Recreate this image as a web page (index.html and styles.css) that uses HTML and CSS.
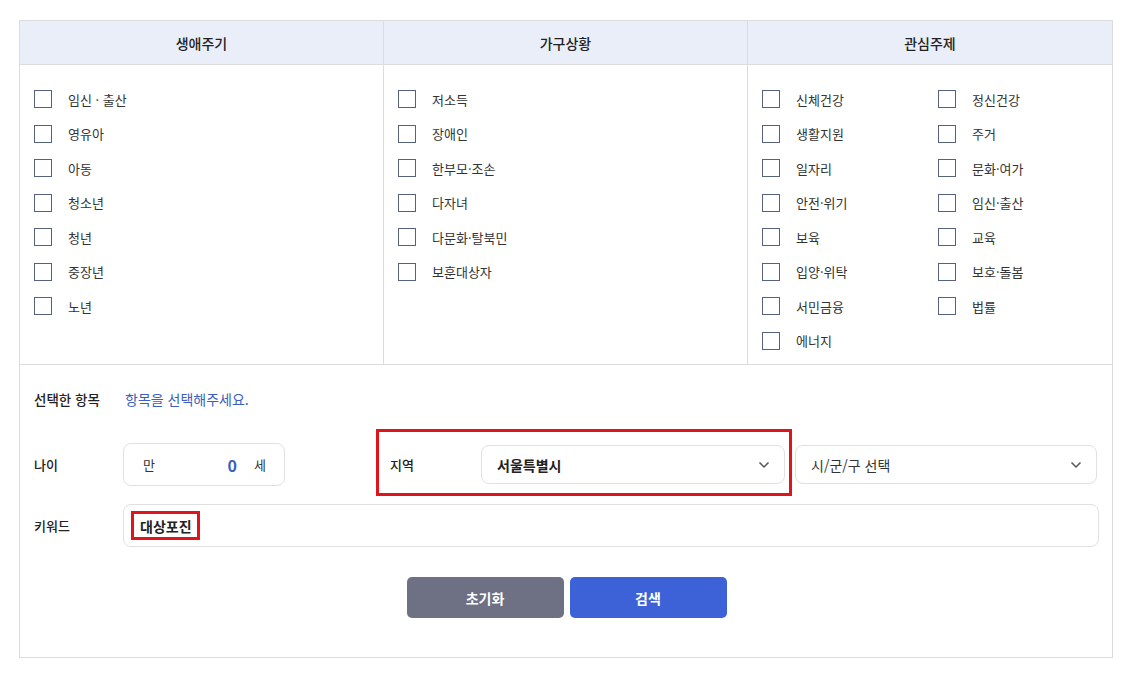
FILE: index.html
```html
<!DOCTYPE html>
<html lang="ko">
<head>
  <meta charset="UTF-8" />
  <meta name="viewport" content="width=device-width, initial-scale=1.0"/>
  <title>맞춤 검색</title>
  <link rel="stylesheet" href="styles.css">
</head>
<body>
  <div class="search-box">
    <div class="category-grid">
      <div class="cat-head">생애주기</div>
      <div class="cat-head">가구상황</div>
      <div class="cat-head">관심주제</div>

      <div class="cat-body">
        <label class="check"><span class="box"></span>임신 · 출산</label>
        <label class="check"><span class="box"></span>영유아</label>
        <label class="check"><span class="box"></span>아동</label>
        <label class="check"><span class="box"></span>청소년</label>
        <label class="check"><span class="box"></span>청년</label>
        <label class="check"><span class="box"></span>중장년</label>
        <label class="check"><span class="box"></span>노년</label>
      </div>

      <div class="cat-body">
        <label class="check"><span class="box"></span>저소득</label>
        <label class="check"><span class="box"></span>장애인</label>
        <label class="check"><span class="box"></span>한부모·조손</label>
        <label class="check"><span class="box"></span>다자녀</label>
        <label class="check"><span class="box"></span>다문화·탈북민</label>
        <label class="check"><span class="box"></span>보훈대상자</label>
      </div>

      <div class="cat-body two-col">
        <label class="check"><span class="box"></span>신체건강</label>
        <label class="check"><span class="box"></span>정신건강</label>
        <label class="check"><span class="box"></span>생활지원</label>
        <label class="check"><span class="box"></span>주거</label>
        <label class="check"><span class="box"></span>일자리</label>
        <label class="check"><span class="box"></span>문화·여가</label>
        <label class="check"><span class="box"></span>안전·위기</label>
        <label class="check"><span class="box"></span>임신·출산</label>
        <label class="check"><span class="box"></span>보육</label>
        <label class="check"><span class="box"></span>교육</label>
        <label class="check"><span class="box"></span>입양·위탁</label>
        <label class="check"><span class="box"></span>보호·돌봄</label>
        <label class="check"><span class="box"></span>서민금융</label>
        <label class="check"><span class="box"></span>법률</label>
        <label class="check"><span class="box"></span>에너지</label>
      </div>
    </div>

    <div class="filters">
      <div class="row selected-row">
        <div class="row-label">선택한 항목</div>
        <div class="selected-text">항목을 선택해주세요.</div>
      </div>

      <div class="row age-row">
        <div class="row-label shift">나이</div>
        <div class="age-box shift">
          <span>만</span>
          <span class="age-num">0</span>
          <span>세</span>
        </div>
        <div class="region-mark">
          <div class="region-label">지역</div>
          <div class="select strong">
            서울특별시
            <svg class="chev" width="12" height="8" viewBox="0 0 12 8"><path d="M1.5 1.5 L6 6 L10.5 1.5" fill="none" stroke="#555" stroke-width="1.5"/></svg>
          </div>
        </div>
        <div class="select sub shift">
          시/군/구 선택
          <svg class="chev" width="12" height="8" viewBox="0 0 12 8"><path d="M1.5 1.5 L6 6 L10.5 1.5" fill="none" stroke="#555" stroke-width="1.5"/></svg>
        </div>
      </div>

      <div class="row keyword-row">
        <div class="row-label">키워드</div>
        <div class="keyword-input">
          <span class="keyword-mark">대상포진</span>
        </div>
      </div>

      <div class="buttons">
        <button class="btn reset">초기화</button>
        <button class="btn search">검색</button>
      </div>
    </div>
  </div>
</body>
</html>
```

FILE: styles.css
```css
* {
  margin: 0;
  padding: 0;
  box-sizing: border-box;
  font-family: 'Noto Sans CJK KR', 'Noto Sans', sans-serif;
}

body {
  background: #fff;
  color: #333;
  font-size: 13px;
}

.search-box {
  margin: 20px 21px 0 19px;
  border: 1px solid #dcdcdc;
}

.category-grid {
  display: grid;
  grid-template-columns: 363px 364px 1fr;
  border-bottom: 1px solid #dcdcdc;
}

.cat-head {
  height: 44px;
  background: #e9eef9;
  border-bottom: 1px solid #dcdcdc;
  display: flex;
  align-items: center;
  justify-content: center;
  font-size: 14px;
  font-weight: 500;
  color: #222;
}

.cat-head + .cat-head,
.cat-body + .cat-body {
  border-left: 1px solid #dcdcdc;
}

.cat-body {
  padding: 17px 14px 6px 14px;
  display: flex;
  flex-direction: column;
}

.cat-body + .cat-body {
  padding-left: 14px;
}

.cat-body.two-col {
  display: grid;
  grid-template-columns: 176px 1fr;
  align-content: start;
}

.check {
  height: 34.5px;
  display: flex;
  align-items: center;
  gap: 16px;
  color: #333;
  font-size: 13px;
  cursor: pointer;
}

.box {
  width: 18px;
  height: 18px;
  border: 1px solid #56627b;
  background: #fff;
  flex-shrink: 0;
}

.filters {
  padding: 23px 13px 39px 14px;
}

.row {
  display: flex;
  align-items: center;
}

.row-label {
  width: 89px;
  flex-shrink: 0;
  font-size: 13px;
  font-weight: 500;
  color: #222;
}

.selected-row {
  height: 22px;
}

.selected-row .row-label {
  font-size: 13.5px;
}

.selected-text {
  margin-left: 2px;
  color: #3a5fc0;
  font-size: 14px;
}

.age-row {
  margin-top: 19px;
}

.shift {
  margin-top: 4px;
}

.age-box {
  width: 162px;
  height: 43px;
  border: 1px solid #e0e0e0;
  border-radius: 8px;
  display: flex;
  align-items: center;
  padding: 0 18px 0 19px;
  font-size: 13px;
  color: #333;
}

.age-box .age-num {
  margin-left: auto;
  margin-right: 17px;
  color: #3a5fc0;
  font-size: 16px;
  font-weight: 700;
}

.region-mark {
  margin-left: 91px;
  width: 416px;
  border: 3px solid #e0141b;
  padding: 13px 4px 9px 11px;
  display: flex;
  align-items: center;
}

.region-label {
  width: 91px;
  font-size: 13px;
  font-weight: 500;
  color: #222;
}

.select {
  height: 39px;
  border: 1px solid #e0e0e0;
  border-radius: 8px;
  display: flex;
  align-items: center;
  justify-content: space-between;
  padding: 0 14px 0 15px;
  font-size: 14px;
  color: #333;
}

.region-mark .select {
  flex: 1;
}

.select.strong {
  font-weight: 600;
  color: #222;
}

.select.sub {
  margin-left: 3px;
  width: 302px;
}

.keyword-row {
  margin-top: 8px;
}

.keyword-input {
  flex: 1;
  height: 43px;
  border: 1px solid #e0e0e0;
  border-radius: 8px;
  display: flex;
  align-items: center;
  padding-left: 7px;
}

.keyword-mark {
  border: 3px solid #e0141b;
  height: 29px;
  display: flex;
  align-items: center;
  padding: 0 5px 0 6px;
  font-size: 14px;
  font-weight: 700;
  color: #222;
}

.buttons {
  margin-top: 30px;
  display: flex;
  justify-content: center;
  gap: 6px;
}

.btn {
  width: 157px;
  height: 41px;
  border: none;
  border-radius: 5px;
  color: #fff;
  font-size: 14px;
  font-weight: 700;
  cursor: pointer;
}

.btn.reset {
  background: #6e7184;
}

.btn.search {
  background: #3d62d7;
}
```
